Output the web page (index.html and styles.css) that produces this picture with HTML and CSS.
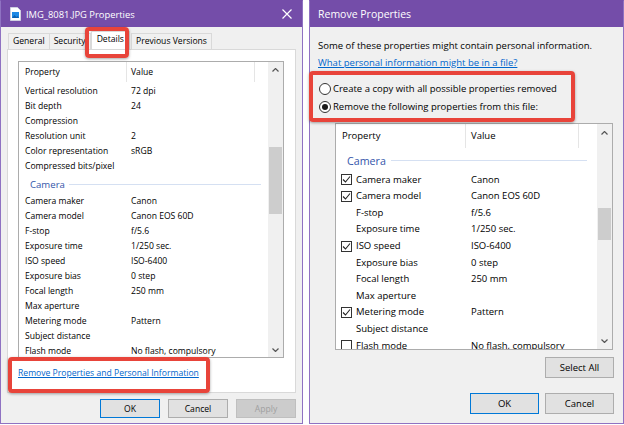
FILE: index.html
```html
<!DOCTYPE html>
<html lang="en">
<head>
    <meta charset="UTF-8">
    <title>Properties</title>
    <link rel="stylesheet" href="styles.css">
</head>
<body>
<div class="screen">

    <!-- file properties dialog -->
    <div class="window props">
        <div class="titlebar">
            <svg class="file-icon" width="11" height="14" viewBox="0 0 11 14">
                <path d="M0.5 0.5h7l3 3v10h-10z" fill="#fff" stroke="#d0d0e0"/>
                <rect x="2" y="5" width="7" height="6" fill="#1e88e5"/>
                <path d="M2 11l2.5-3 2 2 1-1 1.5 2z" fill="#0d5fb0"/>
            </svg>
            <span class="title">IMG_8081.JPG Properties</span>
            <svg class="close" width="10" height="10" viewBox="0 0 10 10">
                <path d="M0.5 0.5l9 9M9.5 0.5l-9 9" stroke="#fff" stroke-width="1.2"/>
            </svg>
        </div>
        <div class="tabs">
            <div class="tab">General</div>
            <div class="tab">Security</div>
            <div class="tab active">Details</div>
            <div class="tab">Previous Versions</div>
        </div>
        <div class="panel">
            <div class="list small">
                <div class="list-main">
                    <div class="list-head">
                        <span class="col-name">Property</span>
                        <span class="col-value">Value</span>
                    </div>
                    <div class="list-body">
                        <div class="row"><span class="name">Vertical resolution</span><span>72 dpi</span></div>
                        <div class="row"><span class="name">Bit depth</span><span>24</span></div>
                        <div class="row"><span class="name">Compression</span><span></span></div>
                        <div class="row"><span class="name">Resolution unit</span><span>2</span></div>
                        <div class="row"><span class="name">Color representation</span><span>sRGB</span></div>
                        <div class="row"><span class="name">Compressed bits/pixel</span><span></span></div>
                        <div class="group"><span>Camera</span><i></i></div>
                        <div class="row"><span class="name">Camera maker</span><span>Canon</span></div>
                        <div class="row"><span class="name">Camera model</span><span>Canon EOS 60D</span></div>
                        <div class="row"><span class="name">F-stop</span><span>f/5.6</span></div>
                        <div class="row"><span class="name">Exposure time</span><span>1/250 sec.</span></div>
                        <div class="row"><span class="name">ISO speed</span><span>ISO-6400</span></div>
                        <div class="row"><span class="name">Exposure bias</span><span>0 step</span></div>
                        <div class="row"><span class="name">Focal length</span><span>250 mm</span></div>
                        <div class="row"><span class="name">Max aperture</span><span></span></div>
                        <div class="row"><span class="name">Metering mode</span><span>Pattern</span></div>
                        <div class="row"><span class="name">Subject distance</span><span></span></div>
                        <div class="row"><span class="name">Flash mode</span><span>No flash, compulsory</span></div>
                    </div>
                </div>
                <div class="scrollbar">
                    <div class="arrow"><svg width="7" height="4" viewBox="0 0 7 4"><polyline points="0.5,3.5 3.5,0.5 6.5,3.5" fill="none" stroke="#555" stroke-width="1.2"/></svg></div>
                    <div class="track"><div class="thumb"></div></div>
                    <div class="arrow"><svg width="7" height="4" viewBox="0 0 7 4"><polyline points="0.5,0.5 3.5,3.5 6.5,0.5" fill="none" stroke="#555" stroke-width="1.2"/></svg></div>
                </div>
            </div>
            <a class="link" href="#">Remove Properties and Personal Information</a>
        </div>
        <div class="buttons">
            <button class="btn default">OK</button>
            <button class="btn">Cancel</button>
            <button class="btn disabled">Apply</button>
        </div>
        <div class="callout callout-tab"></div>
        <div class="callout callout-link"></div>
    </div>

    <!-- remove properties dialog -->
    <div class="window remove">
        <div class="titlebar">
            <span class="title">Remove Properties</span>
        </div>
        <div class="content">
            <p class="intro">Some of these properties might contain personal information.</p>
            <a class="link" href="#">What personal information might be in a file?</a>
            <div class="radios">
                <div class="radio-row"><span class="radio"></span>Create a copy with all possible properties removed</div>
                <div class="radio-row"><span class="radio checked"></span>Remove the following properties from this file:</div>
            </div>
            <div class="list large">
                <div class="list-main">
                    <div class="list-head">
                        <span class="col-name">Property</span>
                        <span class="col-value">Value</span>
                    </div>
                    <div class="list-body">
                        <div class="group"><span>Camera</span><i></i></div>
                        <div class="row"><span class="name"><span class="check on"></span>Camera maker</span><span>Canon</span></div>
                        <div class="row"><span class="name"><span class="check on"></span>Camera model</span><span>Canon EOS 60D</span></div>
                        <div class="row"><span class="name"><span class="check none"></span>F-stop</span><span>f/5.6</span></div>
                        <div class="row"><span class="name"><span class="check none"></span>Exposure time</span><span>1/250 sec.</span></div>
                        <div class="row"><span class="name"><span class="check on"></span>ISO speed</span><span>ISO-6400</span></div>
                        <div class="row"><span class="name"><span class="check none"></span>Exposure bias</span><span>0 step</span></div>
                        <div class="row"><span class="name"><span class="check none"></span>Focal length</span><span>250 mm</span></div>
                        <div class="row"><span class="name"><span class="check none"></span>Max aperture</span><span></span></div>
                        <div class="row"><span class="name"><span class="check on"></span>Metering mode</span><span>Pattern</span></div>
                        <div class="row"><span class="name"><span class="check none"></span>Subject distance</span><span></span></div>
                        <div class="row"><span class="name"><span class="check"></span>Flash mode</span><span>No flash, compulsory</span></div>
                    </div>
                </div>
                <div class="scrollbar">
                    <div class="arrow"><svg width="7" height="4" viewBox="0 0 7 4"><polyline points="0.5,3.5 3.5,0.5 6.5,3.5" fill="none" stroke="#555" stroke-width="1.2"/></svg></div>
                    <div class="track"><div class="thumb"></div></div>
                    <div class="arrow"><svg width="7" height="4" viewBox="0 0 7 4"><polyline points="0.5,0.5 3.5,3.5 6.5,0.5" fill="none" stroke="#555" stroke-width="1.2"/></svg></div>
                </div>
            </div>
            <div class="select-row">
                <button class="btn">Select All</button>
            </div>
            <div class="buttons">
                <button class="btn default">OK</button>
                <button class="btn">Cancel</button>
            </div>
        </div>
        <div class="callout callout-radio"></div>
    </div>

</div>
</body>
</html>
```

FILE: styles.css
```css
* {
    box-sizing: border-box;
}
body {
    margin: 0;
    background: #fff;
    font-family: "Open Sans", "Noto Sans", sans-serif;
    color: #000;
}
.screen {
    display: flex;
    gap: 6px;
    width: 624px;
    height: 425px;
}

/* window frame */
.window {
    position: relative;
    height: 424px;
    border: 1px solid #8f72c2;
    border-top-color: #744da9;
    background: #f0f0f0;
    display: flex;
    flex-direction: column;
}
.window.props {
    width: 303px;
}
.window.remove {
    width: 315px;
}
.titlebar {
    height: 26px;
    flex: none;
    background: #744da9;
    color: #fff;
    display: flex;
    align-items: center;
}
.props .titlebar {
    padding: 0 10px 0 9px;
    font-size: 9.4px;
}
.remove .titlebar {
    padding: 0 8px;
    font-size: 10.5px;
}
.file-icon {
    margin-right: 5px;
}
.title {
    flex: 1;
}

/* tabs */
.tabs {
    height: 22px;
    display: flex;
    align-items: flex-end;
    padding-left: 7px;
    font-size: 8.6px;
}
.tab {
    height: 16px;
    line-height: 14px;
    padding: 0 4px;
    border: 1px solid #d9d9d9;
    border-bottom: none;
    margin-right: -1px;
}
.tab.active {
    position: relative;
    height: 18px;
    line-height: 15px;
    padding: 0 5px;
    margin: 0 1px 0 1px;
    background: #fff;
    z-index: 1;
}

/* details panel */
.panel {
    height: 344px;
    margin: 0 6px;
    padding: 11px 0 0 10px;
    background: #fff;
    border: 1px solid #d9d9d9;
}

/* property lists */
.list {
    display: flex;
    background: #fff;
    border: 1px solid #acacac;
    overflow: hidden;
}
.list-main {
    flex: 1;
    overflow: hidden;
}
.list-head {
    display: flex;
}
.col-name {
    border-right: 1px solid #e5e5e5;
}
.col-value {
    border-right: 1px solid #e5e5e5;
}
.row {
    display: flex;
    white-space: nowrap;
}
.group {
    display: flex;
    align-items: center;
}
.group i {
    flex: 1;
    height: 1px;
    background: #d5e0f2;
}

.list.small {
    width: 266px;
    height: 297px;
    font-size: 8.6px;
}
.small .list-head {
    height: 20px;
    line-height: 20px;
}
.small .col-name {
    width: 108px;
    padding-left: 6px;
}
.small .col-value {
    width: 128px;
    padding-left: 4px;
}
.small .list-body {
    padding-top: 2px;
}
.small .row {
    height: 15px;
    line-height: 15px;
}
.small .name {
    width: 112px;
    padding-left: 6px;
}
.small .group {
    height: 20px;
    padding: 0 7px 0 11px;
    font-size: 9.6px;
    color: #3355aa;
}
.small .group span {
    margin-right: 4px;
}

.list.large {
    width: 278px;
    height: 227px;
    margin-left: 17px;
    font-size: 9.5px;
}
.large .list-head {
    height: 24px;
    line-height: 24px;
}
.large .col-name {
    width: 130px;
    padding-left: 6px;
}
.large .col-value {
    width: 113px;
    padding-left: 5px;
}
.large .row {
    height: 16.6px;
    line-height: 16.6px;
}
.large .name {
    width: 135px;
    padding-left: 5px;
    display: flex;
    align-items: center;
}
.large .group {
    height: 23.7px;
    padding: 2px 10px 0 11px;
    font-size: 10.7px;
    color: #3355aa;
}
.large .group span {
    margin-right: 5px;
}

/* checkboxes */
.check {
    width: 11px;
    height: 11px;
    margin-right: 4px;
    border: 1px solid #333;
    background: #fff;
    flex: none;
}
.check.on {
    background: #fff url("data:image/svg+xml,%3Csvg xmlns='http://www.w3.org/2000/svg' width='9' height='9'%3E%3Cpolyline points='1,4.5 3.5,7 8,1.5' fill='none' stroke='%23222' stroke-width='1.1'/%3E%3C/svg%3E") no-repeat center;
}
.check.none {
    border-color: transparent;
    background: none;
}

/* scrollbars */
.scrollbar {
    width: 15px;
    background: #f0f0f0;
    display: flex;
    flex-direction: column;
}
.arrow {
    height: 15px;
    display: flex;
    align-items: center;
    justify-content: center;
}
.track {
    flex: 1;
}
.thumb {
    margin: 0 1px;
    background: #cdcdcd;
}
.small .thumb {
    margin-top: 70px;
    height: 67px;
}
.large .arrow {
    height: 17px;
}
.large .thumb {
    margin-top: 67px;
    height: 32px;
}

/* links */
.link {
    display: block;
    color: #0066cc;
    text-decoration: underline;
}
.panel .link {
    margin-top: 9px;
    font-size: 8.6px;
    line-height: 12px;
}

/* buttons */
.buttons {
    display: flex;
    justify-content: flex-end;
}
.btn {
    height: 19px;
    width: 60px;
    padding: 0;
    font-family: inherit;
    font-size: 8.6px;
    color: #000;
    background: #e1e1e1;
    border: 1px solid #adadad;
}
.btn.default {
    border-color: #0078d7;
}
.btn.disabled {
    color: #a0a0a0;
    background: #cccccc;
    border-color: #bfbfbf;
}
.props .buttons {
    gap: 8px;
    margin-top: 6px;
    padding-right: 6px;
}

/* remove dialog */
.content {
    padding: 9.5px 9px 0 8px;
    font-size: 9.5px;
}
.intro {
    margin: 0;
    line-height: 17px;
}
.content .link {
    line-height: 17px;
}
.radios {
    margin-top: 9px;
    padding-left: 1px;
}
.radio-row {
    height: 18px;
    display: flex;
    align-items: center;
}
.radio {
    width: 12px;
    height: 12px;
    margin-right: 2px;
    border: 1px solid #333;
    border-radius: 50%;
    background: #fff;
    display: flex;
    align-items: center;
    justify-content: center;
}
.radio.checked::after {
    content: "";
    width: 6px;
    height: 6px;
    border-radius: 50%;
    background: #1a1a1a;
}
.content .list {
    margin-top: 7.5px;
}
.select-row {
    display: flex;
    justify-content: flex-end;
    margin-top: 7px;
}
.content .btn {
    width: 69px;
    height: 21px;
    font-size: 9.5px;
}
.content .buttons {
    gap: 6px;
    margin-top: 15px;
}

/* red highlight boxes */
.callout {
    position: absolute;
    border: 4px solid #e8443a;
    border-radius: 4px;
    box-shadow: 0 1px 3px rgba(0,0,0,0.35);
    z-index: 2;
}
.callout-tab {
    left: 84px;
    top: 26px;
    width: 44px;
    height: 31px;
}
.callout-link {
    left: 7px;
    top: 356px;
    width: 202px;
    height: 36px;
}
.callout-radio {
    left: -1px;
    top: 70px;
    width: 266px;
    height: 51px;
}
```
